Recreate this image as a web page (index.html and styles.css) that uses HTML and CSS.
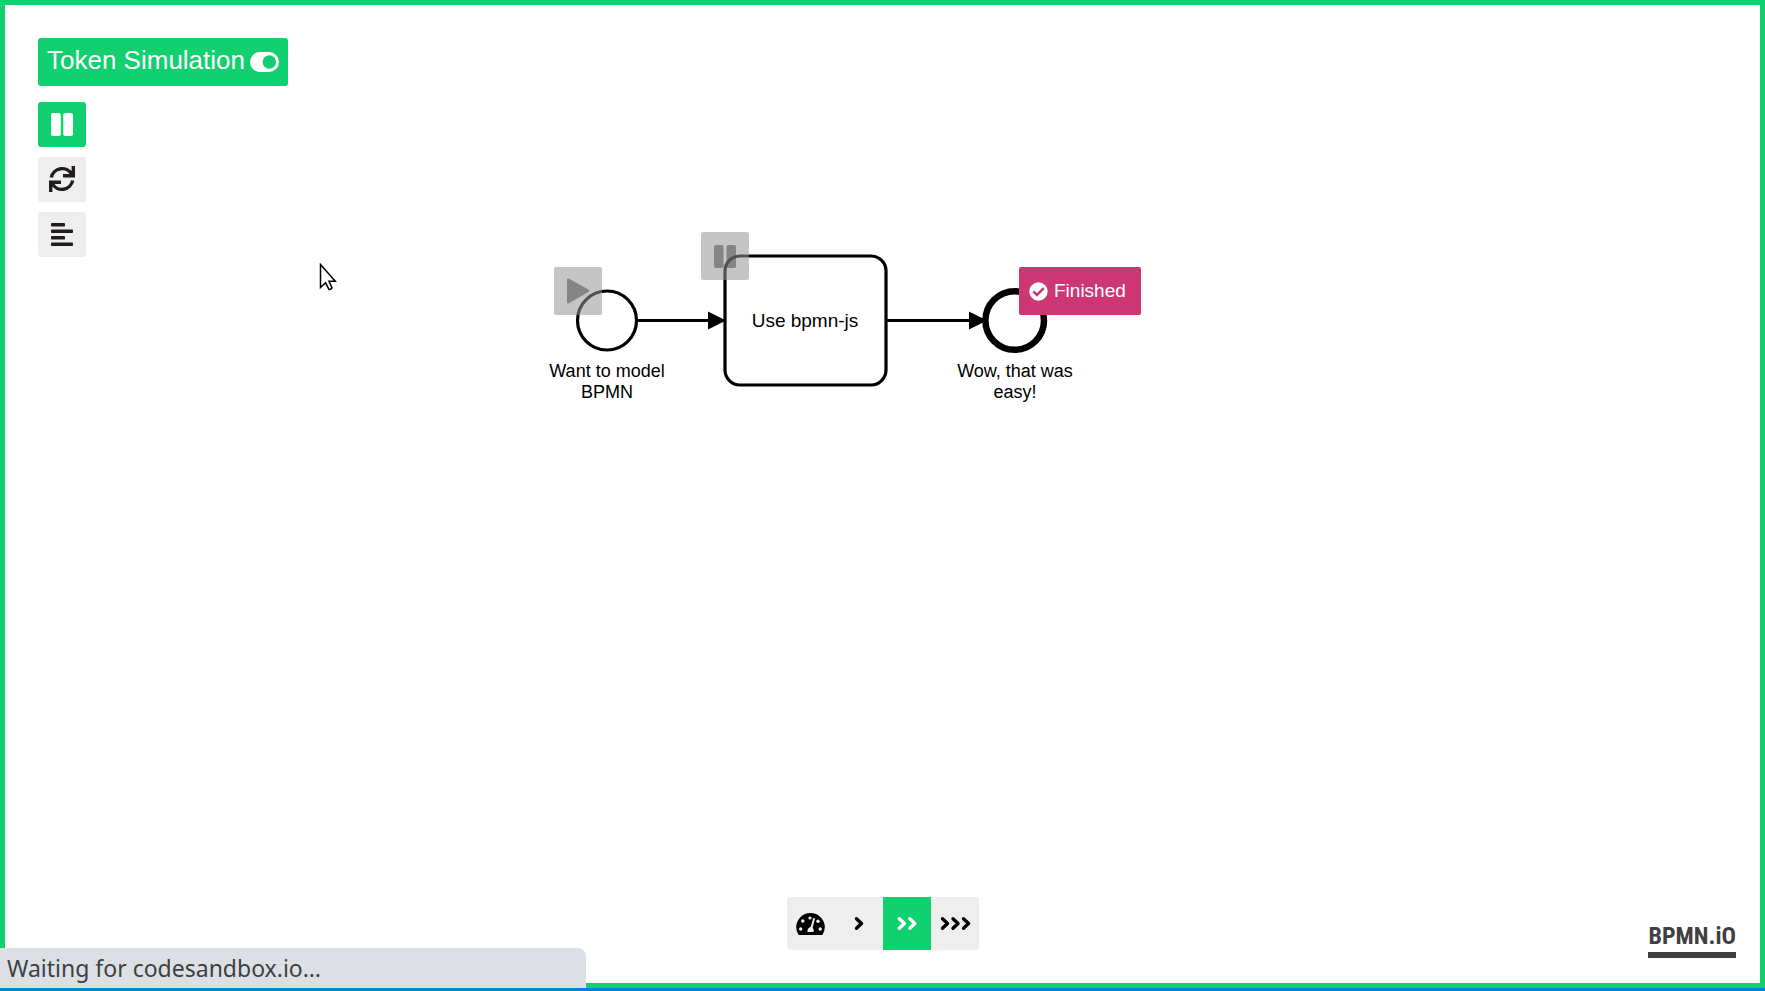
FILE: index.html
```html
<!DOCTYPE html>
<html lang="en">
<head>
<meta charset="utf-8">
<title>Token Simulation</title>
<link rel="stylesheet" href="styles.css">
</head>
<body>
<main class="simulator">
  <section class="canvas" aria-label="Process diagram">
    <div class="diagram">
      <svg class="shapes" viewBox="0 0 600 180" aria-hidden="true">
        <g fill="none" stroke="#000" stroke-width="3.200">
          <path d="M90.500 90.500H165M341 90.500H424"/>
          <circle cx="61" cy="90.500" r="29.500"/>
          <rect x="179" y="26" width="161" height="129" rx="15"/>
          <circle cx="468.700" cy="90.500" r="29.300" stroke-width="6.500"/>
        </g>
        <path d="M162 81.500L180 90.500L162 99.500ZM423 81.500L441 90.500L423 99.500Z"/>
      </svg>
      <span class="label start-label">Want to model<br>BPMN</span>
      <span class="label task-label">Use bpmn-js</span>
      <span class="label end-label">Wow, that was<br>easy!</span>
      <button class="pad pad-start" aria-label="Trigger start event">
        <svg width="24" height="26" viewBox="0 0 24 26"><path d="M1 1.500Q1 0 2.500 .6L22.500 11.500Q24 12.800 22.500 14L2.500 25.400Q1 26 1 24.500Z" fill="currentColor"/></svg>
      </button>
      <button class="pad pad-task" aria-label="Add pause point">
        <svg width="22" height="23" viewBox="0 0 22 23" fill="currentColor"><rect width="9.500" height="23" rx="1.800"/><rect x="12.500" width="9.500" height="23" rx="1.800"/></svg>
      </button>
      <div class="notice">
        <svg width="19" height="19" viewBox="0 0 19 19"><circle cx="9.500" cy="9.500" r="9.200" fill="#fff"/><path d="M4.300 9.500L8 13L14.800 6.200" fill="none" stroke="#cd3773" stroke-width="2.500"/></svg>
        <span>Finished</span>
      </div>
    </div>
    <svg class="pointer" width="20" height="30" viewBox="0 0 20 30" aria-hidden="true"><path d="M1.500 1.500V24.500L6.600 19.800L9.800 26.200Q11.500 27 13 25L10 18.300H16.300Z" fill="#fff" stroke="#000" stroke-width="1.500"/></svg>
  </section>

  <header class="tools">
    <button class="toggle" aria-pressed="true">
      <span>Token Simulation</span>
      <svg width="29" height="20" viewBox="0 0 29 20"><rect width="29" height="20" rx="10" fill="#fff"/><circle cx="19.300" cy="10" r="6.700" fill="#10d070"/></svg>
    </button>
    <nav class="palette" aria-label="Simulation controls">
      <button class="entry active" aria-label="Pause simulation">
        <svg width="22" height="23" viewBox="0 0 22 23" fill="currentColor"><rect width="9.800" height="23" rx="1.800"/><rect x="12.300" width="9.700" height="23" rx="1.800"/></svg>
      </button>
      <button class="entry" aria-label="Reset simulation">
        <svg width="26" height="27" viewBox="0 0 26 27" fill="none" stroke="currentColor" stroke-width="3.400"><path d="M2.300 11.500A11 11 0 0 1 22.800 8.500M24.300 0V9.700H14M23.700 14.500A11 11 0 0 1 3.200 17.500M1.700 26V16.300H12"/><path d="M19 9.700L24 4.500V9.700ZM7 16.300L2 21.500V16.300Z" fill="currentColor" stroke="none"/></svg>
      </button>
      <button class="entry" aria-label="Show simulation log">
        <svg width="22" height="24" viewBox="0 0 22 24" fill="currentColor"><rect width="14" height="3.500" rx=".8"/><rect y="6.500" width="22" height="3.500" rx=".8"/><rect y="13" width="14" height="3.500" rx=".8"/><rect y="19.500" width="22" height="3.500" rx=".8"/></svg>
      </button>
    </nav>
  </header>

  <footer class="bottom">
    <div class="speed" role="group" aria-label="Animation speed">
      <span class="gauge">
        <svg width="29" height="22" viewBox="0 0 29 22"><path d="M2.600 22Q.2 18.500 .2 14.300A14.300 14.300 0 0 1 28.800 14.300Q28.800 18.500 26.400 22Z"/><g fill="#eee"><circle cx="6.800" cy="8" r="1.700"/><circle cx="14" cy="5" r="1.600"/><circle cx="22" cy="8.300" r="1.700"/><circle cx="4.700" cy="16" r="1.700"/><circle cx="24.200" cy="16" r="1.700"/><path d="M17.200 5L19 5.500L16.700 14.400Q18.200 16.500 17.500 19H11.500Q10.800 15.500 14.800 13.800Z"/></g></svg>
      </span>
      <button class="rate" aria-label="Slow"><svg width="48" height="53" viewBox="0 0 48 53"><path d="M21.500 21.700L26.500 26.500L21.500 31.300"/></svg></button>
      <button class="rate active" aria-label="Normal" aria-pressed="true"><svg width="48" height="53" viewBox="0 0 48 53"><path d="M16.300 21.700L21.300 26.500L16.300 31.300M26.800 21.700L31.800 26.500L26.800 31.300"/></svg></button>
      <button class="rate" aria-label="Fast"><svg width="48" height="53" viewBox="0 0 48 53"><path d="M11.500 21.700L16.500 26.500L11.500 31.300M22 21.700L27 26.500L22 31.300M32.500 21.700L37.500 26.500L32.500 31.300"/></svg></button>
    </div>
    <a class="logo" href="#">BPMN.iO</a>
  </footer>
</main>
<div class="status" role="status">Waiting for codesandbox.io…</div>
</body>
</html>
```
FILE: styles.css
```css
* { box-sizing: border-box; }

body {
  margin: 0;
  min-height: 100vh;
  display: flex;
  position: relative;
  border-bottom: 3px solid #0085d0;
  background: #fff;
  color: #000;
  font-family: "Liberation Sans", Arial, sans-serif;
}

button {
  border: 0;
  padding: 0;
  font: inherit;
  color: inherit;
  cursor: pointer;
}

svg { display: block; flex: none; }

.simulator {
  flex: 1;
  position: relative;
  display: flex;
  flex-direction: column;
  justify-content: space-between;
  border: 5px solid #10d070;
}

.canvas {
  position: absolute;
  inset: 0;
  overflow: hidden;
}

.diagram {
  position: absolute;
  left: 541px;
  top: 225px;
  width: 600px;
  height: 180px;
}

.shapes { width: 100%; }

.label {
  position: absolute;
  width: 150px;
  text-align: center;
  font-size: 18px;
  line-height: 21px;
}

.start-label { left: -14px; top: 131px; }
.task-label { left: 184px; top: 80px; font-size: 19px; }
.end-label { left: 394px; top: 131px; }

.pad {
  position: absolute;
  width: 48px;
  height: 48px;
  display: flex;
  align-items: center;
  justify-content: center;
  border-radius: 2px;
  background: rgba(150, 150, 150, 0.55);
  color: rgba(80, 80, 80, 0.55);
}

.pad-start { left: 8px; top: 37px; }
.pad-task { left: 155px; top: 2px; }

.notice {
  position: absolute;
  left: 473px;
  top: 37px;
  width: 122px;
  height: 48px;
  display: flex;
  align-items: center;
  gap: 6px;
  padding-left: 10px;
  border-radius: 2px;
  background: #cd3773;
  color: #fff;
  font-size: 19px;
}

.pointer {
  position: absolute;
  left: 314px;
  top: 258px;
}

.tools {
  position: relative;
  display: flex;
  flex-direction: column;
  align-items: flex-start;
  gap: 16px;
  padding: 33px;
}

.toggle {
  height: 48px;
  display: flex;
  align-items: center;
  gap: 5px;
  padding: 0 9px;
  border-radius: 3px;
  background: #10d070;
  color: #fff;
  font-size: 26px;
}

.toggle span { padding-bottom: 4px; }

.palette {
  display: flex;
  flex-direction: column;
  gap: 10px;
}

.entry {
  width: 48px;
  height: 45px;
  display: flex;
  align-items: center;
  justify-content: center;
  border-radius: 3px;
  background: #eee;
  color: #211d1e;
}

.active { background: #10d070; color: #fff; }

.bottom {
  position: relative;
  display: grid;
  grid-template-columns: 1fr auto 1fr;
  align-items: end;
  padding: 0 24px 25px;
}

.speed {
  grid-column: 2;
  display: flex;
  margin-bottom: 8px;
  border-radius: 3px;
  overflow: hidden;
  background: #eee;
}

.gauge {
  width: 48px;
  display: flex;
  align-items: center;
  justify-content: center;
}

.rate { background: #eee; }
.rate.active { background: #10d070; }

.rate path {
  fill: none;
  stroke: currentColor;
  stroke-width: 3.4;
  stroke-linecap: round;
  stroke-linejoin: round;
}

.logo {
  grid-column: 3;
  justify-self: end;
  border-bottom: 6px solid #404040;
  color: #404040;
  font: bold 24px/32px "Roboto Condensed", "Liberation Sans Narrow", "Liberation Sans", sans-serif;
  text-decoration: none;
}

.status {
  position: absolute;
  left: 0;
  bottom: 0;
  width: 586px;
  max-width: 100%;
  height: 40px;
  padding-left: 7px;
  border-top-right-radius: 8px;
  background: #dce0e5;
  color: #3c4043;
  font: 23px/40px "Noto Sans", sans-serif;
}
```
